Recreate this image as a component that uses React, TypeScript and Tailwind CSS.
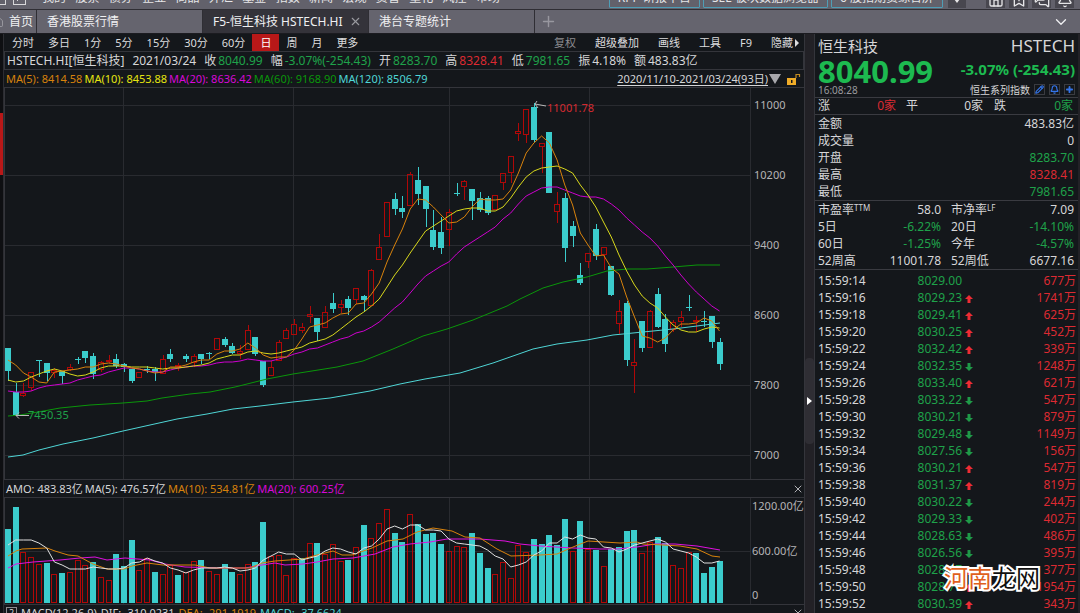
import React from "react";
import { Bell, BookmarkPlus, ChevronDown, House, MessagesSquare, Pencil, Plus, X } from "lucide-react";

type Candle = [up: 0 | 1, open: number, close: number, high: number, low: number];

const STEP = 7.734;
const xOf = (i: number) => 8 + STEP * i;

// [rising, body top, body bottom, wick top, wick bottom] in chart units
const CANDLES: Candle[] = [
  [0, 348, 371, 348, 381], [0, 392, 415, 383, 415], [1, 393, 395, 383, 397], [1, 372, 387, 372, 391],
  [0, 360, 361, 360, 377], [0, 363, 373, 363, 381], [1, 370, 372, 368, 378], [0, 371, 376, 371, 384],
  [1, 367, 369, 364, 371], [0, 359, 360, 357, 364], [0, 351, 358, 351, 363], [0, 356, 374, 353, 379],
  [1, 362, 369, 361, 372], [1, 360, 361, 355, 363], [0, 359, 366, 354, 368], [0, 364, 367, 363, 372],
  [0, 369, 381, 369, 383], [1, 372, 377, 372, 378], [0, 369, 370, 366, 373], [0, 369, 372, 367, 381],
  [1, 359, 373, 355, 374], [0, 354, 359, 349, 362], [1, 365, 366, 363, 371], [0, 356, 359, 354, 362],
  [1, 356, 362, 354, 367], [0, 354, 359, 354, 364], [0, 353, 354, 352, 359], [1, 338, 349, 338, 350],
  [0, 339, 345, 337, 347], [0, 346, 353, 343, 354], [1, 351, 353, 345, 359], [1, 330, 349, 325, 349],
  [0, 337, 354, 337, 356], [0, 361, 385, 361, 387], [1, 367, 375, 361, 375], [1, 342, 360, 340, 360],
  [1, 330, 338, 328, 338], [1, 324, 334, 319, 334], [1, 327, 330, 323, 333], [1, 314, 316, 306, 323],
  [0, 318, 332, 318, 341], [1, 312, 327, 306, 327], [0, 303, 309, 293, 313], [1, 304, 307, 300, 313],
  [0, 299, 308, 296, 315], [1, 288, 299, 288, 304], [0, 296, 300, 295, 312], [1, 270, 305, 269, 306],
  [1, 247, 259, 234, 259], [1, 202, 236, 202, 237], [0, 199, 209, 193, 215], [0, 208, 212, 196, 218],
  [1, 174, 205, 172, 205], [0, 180, 194, 167, 205], [0, 186, 209, 186, 227], [0, 230, 247, 210, 250],
  [0, 232, 248, 217, 254], [1, 212, 229, 209, 246], [0, 193, 194, 183, 196], [1, 181, 186, 180, 200],
  [0, 189, 201, 189, 220], [0, 198, 210, 192, 212], [0, 198, 213, 196, 215], [1, 195, 209, 195, 210],
  [1, 173, 182, 173, 190], [1, 156, 172, 156, 183], [1, 131, 133, 123, 141], [1, 109, 134, 109, 143],
  [0, 107, 140, 103, 142], [1, 143, 146, 143, 173], [0, 132, 193, 132, 193], [1, 204, 211, 192, 223],
  [0, 198, 248, 193, 262], [0, 226, 236, 221, 247], [0, 275, 283, 263, 285], [1, 253, 261, 253, 268],
  [0, 229, 256, 224, 260], [1, 247, 254, 247, 270], [0, 266, 295, 266, 296], [1, 311, 323, 300, 334],
  [0, 303, 360, 301, 366], [1, 362, 365, 339, 393], [0, 321, 348, 321, 352], [1, 311, 347, 310, 348],
  [0, 294, 327, 288, 328], [0, 319, 344, 314, 352], [1, 322, 329, 320, 332], [1, 317, 321, 311, 327],
  [0, 307, 308, 295, 311], [1, 320, 321, 316, 332], [0, 321, 322, 311, 327], [0, 316, 342, 316, 348],
  [0, 342, 364, 338, 370],
];

const MA5 = [
  360, 365, 373, 377, 382, 383, 372, 371, 370, 369, 367, 367, 364, 363, 364, 366, 368, 369, 371, 373, 372, 367, 367,
  365, 362, 360, 360, 354, 351, 351, 349, 343, 348, 355, 358, 357, 357, 350, 339, 327, 325, 323, 318, 314, 313, 304,
  303, 294, 283, 262, 245, 229, 209, 199, 200, 207, 215, 223, 222, 217, 207, 199, 200, 200, 199, 190, 173, 153, 143,
  136, 143, 160, 185, 205, 233, 245, 256, 255, 268, 274, 297, 317, 336, 338, 342, 338, 330, 324, 324, 323, 318, 321,
  331,
];
const MA10 = [
  380, 382, 381, 377, 374, 371, 369, 371, 374, 376, 375, 372, 368, 366, 366, 366, 367, 367, 367, 368, 369, 368, 368,
  367, 366, 365, 363, 359, 357, 355, 355, 352, 351, 353, 354, 353, 351, 349, 347, 343, 341, 339, 335, 329, 323, 317,
  312, 306, 299, 287, 275, 265, 253, 242, 231, 226, 221, 216, 211, 209, 208, 208, 211, 211, 207, 198, 187, 177, 171,
  168, 167, 166, 169, 173, 185, 195, 207, 222, 237, 255, 271, 285, 296, 303, 308, 317, 325, 330, 332, 332, 329, 327,
  328,
];
const MA20 = [
  391, 392, 392, 391, 388, 386, 385, 384, 383, 380, 378, 376, 375, 372, 370, 368, 368, 369, 371, 372, 372, 370, 368,
  367, 366, 366, 365, 363, 362, 362, 361, 359, 360, 361, 361, 359, 357, 354, 352, 349, 348, 345, 342, 339, 337, 333,
  331, 327, 322, 315, 308, 302, 293, 284, 276, 271, 266, 262, 254, 247, 242, 237, 232, 227, 219, 213, 204, 196, 192,
  188, 187, 187, 190, 193, 196, 197, 197, 199, 204, 210, 218, 225, 232, 238, 246, 256, 265, 275, 284, 292, 299, 306,
  311,
];
const MA60 =
  "8,416 20,415 38,412 60,408 90,405 123,403 147,401 162,398 190,394 210,392 235,387 267,379 293,374 337,367 363,361 393,349 423,336 447,329 473,320 507,306 520,299 543,288 563,282 587,277 607,271 627,269 647,269 673,267 697,265 720,265";
const MA120 =
  "8,457 23,455 39,450 63,444 93,438 123,431 150,425 177,419 207,414 233,409 260,406 293,402 330,398 370,391 400,384 425,379 460,373 493,363 533,349 557,344 587,340 613,335 643,332 673,329 697,326 720,323";

const VOLUMES: [0 | 1, number][] = [
  [0, 529], [0, 507], [1, 552], [1, 557], [1, 564], [0, 563], [1, 574], [0, 573], [1, 572], [1, 560], [1, 565],
  [0, 562], [1, 577], [1, 580], [0, 554], [0, 566], [0, 540], [1, 570], [1, 558], [0, 572], [1, 574], [1, 565],
  [0, 575], [1, 572], [1, 561], [0, 560], [1, 571], [1, 574], [0, 564], [0, 572], [1, 574], [1, 564], [0, 562],
  [0, 522], [1, 556], [1, 555], [1, 575], [1, 558], [0, 558], [1, 543], [0, 543], [1, 554], [1, 544], [1, 561],
  [0, 560], [1, 547], [0, 525], [1, 538], [1, 523], [1, 509], [0, 533], [0, 542], [1, 514], [0, 524], [0, 534],
  [0, 533], [0, 544], [1, 551], [1, 546], [1, 547], [0, 533], [0, 553], [0, 568], [1, 574], [1, 562], [1, 578],
  [1, 545], [1, 552], [0, 539], [0, 544], [0, 535], [0, 545], [0, 519], [1, 551], [0, 521], [1, 549], [0, 550],
  [1, 566], [0, 549], [0, 547], [0, 531], [0, 530], [1, 553], [1, 542], [0, 537], [0, 543], [1, 565], [1, 568],
  [1, 552], [0, 553], [0, 573], [0, 567], [0, 561],
];
const VMA5 = [
  545, 540, 540, 540, 543, 548, 562, 565, 569, 569, 569, 567, 568, 569, 569, 568, 563, 562, 558, 561, 563, 568, 570,
  573, 570, 568, 568, 568, 567, 568, 571, 570, 568, 560, 556, 552, 554, 554, 560, 558, 556, 551, 548, 549, 552, 554,
  548, 546, 539, 529, 526, 529, 525, 525, 530, 530, 531, 539, 543, 544, 545, 546, 550, 556, 559, 567, 565, 562, 555,
  551, 543, 543, 537, 539, 535, 538, 539, 547, 548, 552, 549, 545, 543, 541, 539, 542, 549, 551, 553, 557, 563, 563,
  561,
];
const VMA10 =
  "8,556 16,551 22,549 47,548 55,551 68,555 78,556 93,564 107,569 124,569 132,566 147,563 163,565 195,565 210,568 250,568 262,563 275,561 303,559 317,555 333,551 342,555 352,555 372,548 387,541 403,539 417,532 433,528 452,531 465,537 480,538 497,549 511,556 540,555 557,554 573,547 588,541 620,543 637,542 643,544 663,545 680,546 697,549 712,556 720,557";
const VMA20 =
  "8,568 16,564 33,562 60,560 80,558 95,557 107,560 125,558 150,560 165,564 185,567 220,568 245,568 262,565 275,563 285,565 303,564 317,562 333,559 353,558 375,554 393,547 410,544 430,542 447,539 480,539 505,541 520,544 540,546 556,547 573,548 600,549 617,549 637,547 655,544 675,544 697,546 720,550";

const pts = (ys: number[]) => ys.map((y, i) => `${xOf(i).toFixed(1)},${y}`).join(" ");

const RED = "#b00808";
const CYAN = "#3bcccc";
const GRID = "#292b30";
const V_LINES = [123, 293, 449, 589, 750];

function PriceChart() {
  const levels: [number, string][] = [
    [105, "11000"], [175, "10200"], [245, "9400"], [315, "8600"], [385, "7800"], [455, "7000"],
  ];
  return (
    <svg viewBox="4 87 800 393" className="block h-auto w-full" role="img" aria-label="日K线">
      <g shapeRendering="crispEdges">
        <path d="M4 87.500H804M4.500 87V480M4 479.500H804" stroke="#34353b" fill="none" />
        {V_LINES.map((x) => (
          <rect key={x} x={x} y={88} width={1} height={391} fill={GRID} />
        ))}
        {levels.map(([y]) => (
          <rect key={y} x={5} y={y} width={745} height={1} fill={GRID} />
        ))}
        {CANDLES.map(([up, top, bottom, high, low], i) => {
          const x = Math.round(xOf(i));
          const h = Math.max(bottom - top, 1);
          return up ? (
            <g key={i}>
              <rect x={x} y={high} width={1} height={Math.max(top - high, 0)} fill={RED} />
              <rect x={x} y={bottom} width={1} height={Math.max(low - bottom, 0)} fill={RED} />
              <rect x={x - 2.5} y={top + 0.5} width={5} height={h} fill="none" stroke={RED} />
            </g>
          ) : (
            <g key={i}>
              <rect x={x} y={high} width={1} height={low - high} fill={CYAN} />
              <rect x={x - 3} y={top} width={6} height={h} fill={CYAN} />
            </g>
          );
        })}
      </g>
      <g fill="none" strokeWidth={1}>
        <polyline points={MA120} stroke="#4fd6d6" />
        <polyline points={MA60} stroke="#0a960a" />
        <polyline points={pts(MA20)} stroke="#cf00cf" />
        <polyline points={pts(MA10)} stroke="#d8d81c" />
        <polyline points={pts(MA5)} stroke="#d8820c" />
        <path d="M29 415.500H16l3 3M16 415.500l3-3" stroke="#b9b9b9" />
        <path d="M546 106l-11-2 3 4M535 104l2-3" stroke="#b9b9b9" />
      </g>
      <g className="text-[11px]">
        {levels.map(([y, label]) => (
          <text key={label} x={754} y={y + 4} fill="#b4b4b6">{label}</text>
        ))}
        <text x={28} y={419} fill="#1fa24a">7450.35</text>
        <text x={547} y={112} fill="#d42a30">11001.78</text>
      </g>
    </svg>
  );
}

function VolumeChart() {
  return (
    <svg viewBox="4 497 800 108" className="block h-auto w-full" role="img" aria-label="成交额">
      <g shapeRendering="crispEdges">
        <path d="M4 497.500H804M4.500 497V605M4 604.500H804" stroke="#34353b" fill="none" />
        {V_LINES.map((x) => (
          <rect key={x} x={x} y={498} width={1} height={106} fill={GRID} />
        ))}
        <rect x={5} y={551} width={745} height={1} fill={GRID} />
        {VOLUMES.map(([up, top], i) => {
          const x = Math.round(xOf(i));
          return up ? (
            <rect key={i} x={x - 2.5} y={top + 0.5} width={5} height={602 - top} fill="none" stroke={RED} />
          ) : (
            <rect key={i} x={x - 3} y={top} width={6} height={603 - top} fill={CYAN} />
          );
        })}
      </g>
      <g fill="none" strokeWidth={1}>
        <polyline points={VMA20} stroke="#e010e0" />
        <polyline points={VMA10} stroke="#d8820c" />
        <polyline points={pts(VMA5)} stroke="#e0e0e0" />
      </g>
      <g className="text-[11px]" fill="#b4b4b6">
        <text x={752} y={510}>1200.00亿</text>
        <text x={752} y={555}>600.00亿</text>
        <text x={752} y={599}>0</text>
      </g>
    </svg>
  );
}

function TopMenu() {
  const items = ["我的", "股票", "债券", "企业", "商品", "外汇", "基金", "指数", "新闻", "宏观", "资管", "量化", "风控", "市场"];
  const tools = ["RPP 研报平台", "SEE 板块数据浏览器", "6 股指期货综合屏"];
  const icons = [House, BookmarkPlus, MessagesSquare, Bell];
  return (
    <header className="flex h-[10px] shrink-0 items-end overflow-hidden border-b border-[#2f2e34] bg-[#62616b] text-[#e6e6e8]">
      <div className="flex w-[26px] shrink-0 gap-[7px] pb-[4px]">
        <span className="h-[14px] w-[6px] border border-l-0 border-[#d8d8da]" />
        <span className="flex h-[14px] w-[13px] items-center justify-center border border-[#d8d8da]">
          <svg viewBox="0 0 8 8" className="h-2 w-2 fill-none stroke-[#d8d8da]"><path d="M1 7l6-6M3 1h4v4" /></svg>
        </span>
      </div>
      <nav className="ml-[16px] flex w-[458px] justify-between pb-[3px] leading-4">
        {items.map((t) => (
          <a key={t} href="#" className="whitespace-nowrap">{t}</a>
        ))}
      </nav>
      <div className="ml-auto flex items-end gap-[3px] pb-[1px]">
        {tools.map((t) => (
          <button key={t} className="flex h-[24px] items-end whitespace-nowrap rounded-[1px] border border-[#4f9db5] px-[8px] pb-[1px] leading-4">{t}</button>
        ))}
        <button aria-label="展开" className="ml-[2px] flex h-5 w-[18px] items-end justify-center bg-[#48474f] pb-[5px]">
          <svg viewBox="0 0 6 4" className="h-1 w-[6px] fill-current"><path d="M0 0h6L3 4z" /></svg>
        </button>
        <div className="ml-[17px] mr-[6px] flex gap-[4px]">
          {icons.map((Icon, i) => (
            <button key={i} aria-label={["主页", "收藏", "消息", "提醒"][i]} className="flex h-5 w-[19px] items-end justify-center bg-[#48474f]">
              <Icon size={16} strokeWidth={2} />
            </button>
          ))}
        </div>
      </div>
    </header>
  );
}

function TabBar() {
  return (
    <div className="flex h-6 shrink-0 items-stretch border-b border-[#1b1b20] bg-[#65646e] leading-6 text-[#f0f0f2]">
      <button className="flex w-[37px] shrink-0 items-center overflow-hidden border-r border-[#2f2e34]">
        <House size={12} strokeWidth={1.25} className="-ml-[8px] mr-[5px] shrink-0 text-[#b5b5ba]" />
        <span className="whitespace-nowrap">首页</span>
      </button>
      <button className="w-[166px] border-r border-[#2f2e34] pl-[10px] text-left">香港股票行情</button>
      <button className="flex w-[166px] items-center justify-between border-r border-[#2f2e34] bg-[#34333a] pl-[10px] pr-[6px]">
        <span className="whitespace-nowrap">F5-恒生科技 HSTECH.HI</span>
        <X size={13} strokeWidth={2} className="text-[#9a9aa0]" />
      </button>
      <button className="w-[166px] border-r border-[#2f2e34] pl-[10px] text-left">港台专题统计</button>
      <button aria-label="新建" className="ml-[5px] flex items-center text-[#98979f]">
        <Plus size={17} strokeWidth={2} />
      </button>
      <button aria-label="更多标签" className="ml-auto mr-[10px] flex items-center">
        <ChevronDown size={18} strokeWidth={1.75} />
      </button>
    </div>
  );
}

function Toolbar() {
  const periods = ["分时", "多日", "1分", "5分", "15分", "30分", "60分", "日", "周", "月", "更多"];
  const actions = ["复权", "超级叠加", "画线", "工具", "F9"];
  return (
    <div className="flex h-[18px] items-stretch justify-between border-b border-[#34353b] text-[11px] leading-[17px] text-[#dcdcde]">
      <div className="flex pl-px">
        {periods.map((p) => (
          <button key={p} className={p === "日" ? "bg-[#b81818] px-2 text-white" : "px-[7px]"}>{p}</button>
        ))}
      </div>
      <div className="flex gap-[19px] pr-[4px]">
        {actions.map((a) => (
          <button key={a} className={a === "复权" ? "text-[#8c8c90]" : ""}>{a}</button>
        ))}
        <button className="flex items-center">
          隐藏
          <svg viewBox="0 0 6 8" className="ml-px h-2 w-[6px] fill-current"><path d="M1 0l4 4-4 4z" /></svg>
        </button>
      </div>
    </div>
  );
}

function Summary() {
  const fields: [string, string, string][] = [
    ["收", "8040.99", "text-[#1fa24a]"],
    ["幅", "-3.07%(-254.43)", "text-[#1fa24a]"],
    ["开", "8283.70", "text-[#1fa24a]"],
    ["高", "8328.41", "text-[#dc2a32]"],
    ["低", "7981.65", "text-[#1fa24a]"],
    ["振", "4.18%", ""],
    ["额", "483.83亿", ""],
  ];
  return (
    <div className="flex h-[18px] items-center gap-[8px] whitespace-nowrap border-x border-b border-[#34353b] pl-[2px] leading-[17px] text-[#d6d6d8]">
      <span>HSTECH.HI[恒生科技]</span>
      <span>2021/03/24</span>
      {fields.map(([label, value, color]) => (
        <span key={label} className="flex gap-[2px]">
          <span>{label}</span>
          <span className={color}>{value}</span>
        </span>
      ))}
    </div>
  );
}

function Averages() {
  return (
    <div className="flex h-[17px] items-center gap-[2px] whitespace-nowrap pl-[2px] pr-[3px] text-[11px] leading-[17px]">
      <span className="text-[#d8820c]">MA(5): 8414.58</span>
      <span className="text-[#e6e610]">MA(10): 8453.88</span>
      <span className="text-[#d808d8]">MA(20): 8636.42</span>
      <span className="text-[#0a960a]">MA(60): 9168.90</span>
      <span className="text-[#4fd6d6]">MA(120): 8506.79</span>
      <button className="ml-auto flex items-center text-[#d6d6d8]">
        <span className="underline underline-offset-2">2020/11/10-2021/03/24(93日)</span>
        <svg viewBox="0 0 12 10" className="ml-px h-[10px] w-3 fill-[#a8a8ac]"><path d="M0 0h12L6 10z" /></svg>
      </button>
      <button aria-label="解锁" className="ml-[4px]">
        <svg viewBox="0 0 14 12" className="h-3 w-[14px]">
          <path d="M9 5V1.500h3.500V4" fill="none" stroke="#c08a20" strokeWidth="1.200" />
          <rect x="0" y="5" width="9" height="7" fill="#f0ac28" />
          <path d="M4 7h1.500v3H4z" fill="#14171b" />
        </svg>
      </button>
    </div>
  );
}

function CloseButton() {
  return (
    <button aria-label="关闭" className="ml-auto text-[#b0b0b4]">
      <X size={12} strokeWidth={2} />
    </button>
  );
}

const green = "text-[#1fa24a]";
const red = "text-[#dc2a32]";

type Tick = [string, string, "up" | "down" | "", string];
const TICKS: Tick[] = [
  ["15:59:14", "8029.00", "", "677万"],
  ["15:59:16", "8029.23", "up", "1741万"],
  ["15:59:18", "8029.41", "up", "625万"],
  ["15:59:20", "8030.25", "up", "452万"],
  ["15:59:22", "8032.42", "up", "339万"],
  ["15:59:24", "8032.35", "down", "1248万"],
  ["15:59:26", "8033.40", "up", "621万"],
  ["15:59:28", "8033.22", "down", "547万"],
  ["15:59:30", "8030.21", "down", "879万"],
  ["15:59:32", "8029.48", "down", "1149万"],
  ["15:59:34", "8027.56", "down", "156万"],
  ["15:59:36", "8030.21", "up", "547万"],
  ["15:59:38", "8031.37", "up", "819万"],
  ["15:59:40", "8030.22", "down", "244万"],
  ["15:59:42", "8029.33", "down", "402万"],
  ["15:59:44", "8028.63", "down", "486万"],
  ["15:59:46", "8026.56", "down", "395万"],
  ["15:59:48", "8028.67", "up", "377万"],
  ["15:59:50", "8028.70", "up", "1954万"],
  ["15:59:52", "8030.39", "up", "343万"],
];

function Arrow({ dir }: { dir: "up" | "down" | "" }) {
  if (!dir) return null;
  return (
    <svg viewBox="0 0 8 8" className={dir === "up" ? "mt-[3px] h-2 w-2 fill-[#ee2c34]" : "mt-[3px] h-2 w-2 rotate-180 fill-[#1f9a48]"}>
      <path d="M4 0l4 4H5.500v4h-3V4H0z" />
    </svg>
  );
}

function QuotePanel() {
  const stats: [string, string, string][] = [
    ["金额", "483.83亿", ""],
    ["成交量", "0", ""],
    ["开盘", "8283.70", green],
    ["最高", "8328.41", red],
    ["最低", "7981.65", green],
  ];
  const ratios: [React.ReactNode, string, React.ReactNode, string, string][] = [
    [<>市盈率<sup className="top-0 align-[3px] text-[8px]">TTM</sup></>, "58.0", <>市净率<sup className="top-0 align-[3px] text-[8px]">LF</sup></>, "7.09", ""],
    ["5日", "-6.22%", "20日", "-14.10%", green],
    ["60日", "-1.25%", "今年", "-4.57%", green],
    ["52周高", "11001.78", "52周低", "6677.16", ""],
  ];
  return (
    <aside className="relative w-[264px] shrink-0 overflow-hidden border-l border-[#34353b] bg-[#14171b] text-[#d6d6d8]">
      <div className="flex h-[64px] flex-col border-b border-[#3a3b41] pl-[3px] pr-[3px]">
        <div className="flex h-6 items-center justify-between">
          <h1 className="text-[15px]">恒生科技</h1>
          <span className="text-[17px]">HSTECH</span>
        </div>
        <div className="flex h-[26px] items-center justify-between font-bold text-[#1dba50]">
          <span className="text-[31px] leading-[26px]">8040.99</span>
          <span className="pb-[4px] text-[15px]">-3.07% (-254.43)</span>
        </div>
        <div className="flex h-[13px] items-center leading-[13px]">
          <span className="mr-auto text-[10px] text-[#9a9a9e]">16:08:28</span>
          <span className="mr-[4px] text-[10px]">恒生系列指数</span>
          <div className="flex gap-[4px] pb-[2px] text-[#3474e8]">
            {[Pencil, Bell, Plus].map((Icon, i) => (
              <button key={i} aria-label={["编辑", "提醒", "添加"][i]} className="flex h-[11px] w-[11px] items-center justify-center border border-[#3a3b41]">
                <Icon size={9} strokeWidth={i === 2 ? 5 : 3} />
              </button>
            ))}
          </div>
        </div>
      </div>
      <div className="flex h-[17px] items-center border-b border-[#3a3b41] pl-[3px] pr-[5px] leading-4">
        <span className="flex w-[88px] justify-between pr-[10px]">涨<b className="font-normal text-[#dc2a32]">0家</b></span>
        <span className="flex w-[88px] justify-between pr-[11px]">平<b className="font-normal">0家</b></span>
        <span className="flex flex-1 justify-between">跌<b className="font-normal text-[#1fa24a]">0家</b></span>
      </div>
      <table className="w-full border-b border-[#3a3b41]">
        <tbody>
          {stats.map(([label, value, color]) => (
            <tr key={label} className="h-[17px] leading-[17px]">
              <th className="p-0 pl-[3px] text-left font-normal">{label}</th>
              <td className={`p-0 pr-[4px] text-right ${color}`}>{value}</td>
            </tr>
          ))}
        </tbody>
      </table>
      <table className="w-full border-b border-[#3a3b41]">
        <tbody>
          {ratios.map(([a, av, b, bv, color], i) => (
            <tr key={i} className="h-[17px] leading-[17px]">
              <th className="p-0 pl-[3px] text-left font-normal">{a}</th>
              <td className={`p-0 text-right ${color}`}>{av}</td>
              <th className="w-[62px] whitespace-nowrap p-0 pl-[10px] text-left font-normal">{b}</th>
              <td className={`w-[75px] p-0 pr-[4px] text-right ${color}`}>{bv}</td>
            </tr>
          ))}
        </tbody>
      </table>
      <table className="mt-[2px] w-full">
        <tbody>
          {TICKS.map(([time, price, dir, amount]) => (
            <tr key={time} className="h-[17px] leading-[17px]">
              <td className="p-0 pl-[3px]">{time}</td>
              <td className={`w-[76px] p-0 text-right ${green}`}>{price}</td>
              <td className="w-[16px] p-0 pl-[3px]"><Arrow dir={dir} /></td>
              <td className={`w-[100px] p-0 pr-[2px] text-right ${red}`}>{amount}</td>
            </tr>
          ))}
        </tbody>
      </table>
      <div className="absolute bottom-[17px] right-[38px] whitespace-nowrap text-[24px] leading-9 text-[#101010] [-webkit-text-stroke:4px_white] [paint-order:stroke_fill]">
        <span className="text-[#e0601c]">河南</span>龙网
      </div>
    </aside>
  );
}

export default function App() {
  return (
    <div className="flex h-screen flex-col overflow-hidden bg-[#14171b] font-['Noto_Sans','Noto_Sans_CJK_SC',sans-serif] text-[12px]">
      <TopMenu />
      <TabBar />
      <div className="flex min-h-0 flex-1">
        <div className="w-1 shrink-0 border-r border-[#2c2d32] bg-[#0e0f12] pt-[79px]">
          <div className="h-[62px] bg-[#b81818]" />
        </div>
        <main className="min-w-0 flex-1 overflow-hidden">
          <Toolbar />
          <Summary />
          <Averages />
          <PriceChart />
          <div className="flex h-[17px] items-center gap-[2px] whitespace-nowrap pl-[2px] text-[11px] leading-[17px] text-[#d6d6d8]">
            <span>AMO: 483.83亿</span>
            <span>MA(5): 476.57亿</span>
            <span className="text-[#d8820c]">MA(10): 534.81亿</span>
            <span className="text-[#d808d8]">MA(20): 600.25亿</span>
            <CloseButton />
          </div>
          <VolumeChart />
          <div className="flex h-[15px] items-center gap-[4px] whitespace-nowrap pl-[2px] text-[11px] leading-[15px] text-[#d6d6d8]">
            <span className="flex h-[11px] w-[11px] items-center justify-center border border-[#8c8c90] text-[9px]">2</span>
            <span>MACD(12,26,9)</span>
            <span>DIF: -310.0231</span>
            <span className="text-[#d8820c]">DEA: -291.1919</span>
            <span className="text-[#4fd6d6]">MACD: -37.6624</span>
            <CloseButton />
          </div>
        </main>
        <button aria-label="收起侧栏" className="flex w-[10px] shrink-0 items-start justify-center border-l border-[#34353b] bg-[#222126] pt-[324px]">
          <span className="flex h-[86px] w-full items-center justify-center rounded-sm bg-[#2f2e34]">
            <svg viewBox="0 0 5 8" className="h-2 w-[5px] fill-white"><path d="M0 0l5 4-5 4z" /></svg>
          </span>
        </button>
        <QuotePanel />
        <div className="w-[2px] shrink-0 bg-[#222126]" />
      </div>
    </div>
  );
}
